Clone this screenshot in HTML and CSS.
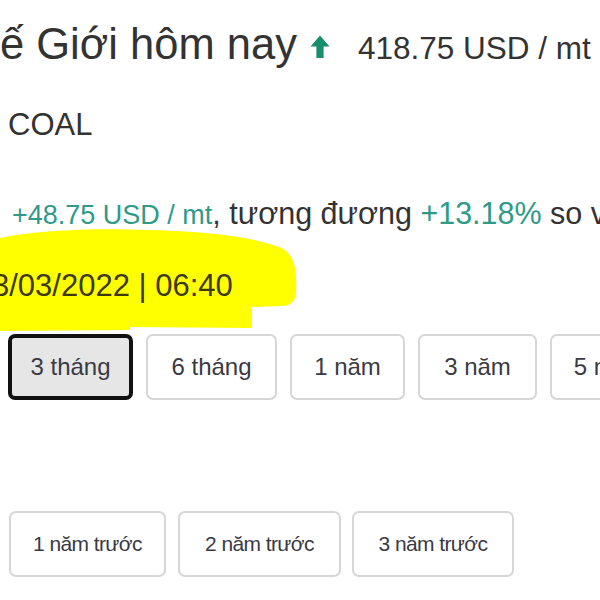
FILE: index.html
```html
<!DOCTYPE html>
<html lang="vi">
<head>
<meta charset="utf-8">
<link rel="stylesheet" href="styles.css">
</head>
<body>
<div class="page">
  <svg class="marker" width="300" height="110" viewBox="0 0 300 110" aria-hidden="true">
    <path d="M0 10 C40 2 90 0 150 2 C210 4 250 8 282 20 C296 28 297 45 296 66 C295 74 290 78 282 78 L252 79 L252 100 L130 99 L130 102 L0 103 Z" fill="#ffff00"/>
  </svg>
  <h1 class="title"><span class="head">ế Giới hôm nay</span><svg class="arrow" width="20" height="23" viewBox="0 0 20 23"><path d="M10 0.5 L19.5 11.5 L13.6 11.5 L13.6 23 L6.4 23 L6.4 11.5 L0.5 11.5 Z" fill="#178f6f"/></svg><span class="price">418.75 USD / mt</span></h1>
  <div class="symbol">COAL</div>
  <p class="change"><span class="up first">+48.75 USD / mt</span>, tương đương <span class="up">+13.18%</span> so với</p>
  <div class="date">3/03/2022 | 06:40</div>
  <div class="ranges">
    <button class="btn active">3 tháng</button>
    <button class="btn w6">6 tháng</button>
    <button class="btn w1">1 năm</button>
    <button class="btn w3">3 năm</button>
    <button class="btn w5">5 năm</button>
  </div>
  <div class="compare">
    <span class="colon">:</span>
    <button class="btn small s1">1 năm trước</button>
    <button class="btn small s2">2 năm trước</button>
    <button class="btn small s3">3 năm trước</button>
  </div>
</div>
</body>
</html>
```
FILE: styles.css
```css
html, body {
  margin: 0;
  padding: 0;
  background: #fff;
  overflow: hidden;
}
.page {
  position: relative;
  width: 600px;
  height: 600px;
  overflow: hidden;
  font-family: "Liberation Sans", Arial, sans-serif;
  color: #333;
  white-space: nowrap;
  display: flex;
  flex-direction: column;
}
.marker {
  position: absolute;
  left: 0;
  top: 228px;
  z-index: 0;
}
.title {
  margin: 18px 0 0 0;
  font-size: 43.5px;
  line-height: 52px;
  font-weight: normal;
  display: flex;
  align-items: baseline;
}
.arrow {
  margin-left: 13px;
  margin-right: 28px;
  align-self: flex-start;
  margin-top: 17px;
}
.price {
  font-size: 31.5px;
}
.symbol {
  margin-top: 31px;
  padding-left: 8px;
  font-size: 31px;
  line-height: 40px;
}
.change {
  margin: 51px 0 0 0;
  padding-left: 12px;
  font-size: 30.5px;
  line-height: 34px;
}
.up {
  color: #2f9a88;
}
.up.first {
  font-size: 27px;
}
.date {
  position: relative;
  z-index: 1;
  margin: 37px 0 0 -8px;
  font-size: 31px;
  line-height: 34px;
  color: #3d3a10;
}
.ranges {
  margin-top: 31px;
  display: flex;
  gap: 13px;
  padding-left: 8px;
}
.btn {
  font-family: "Liberation Sans", Arial, sans-serif;
  font-size: 24px;
  color: #3a3a44;
  background: #fff;
  border: 2px solid #d6d6d6;
  border-radius: 7px;
  height: 66px;
  padding: 0;
  flex: none;
  box-sizing: border-box;
}
.btn.active {
  width: 125px;
  background: #e6e6e6;
  border: 4px solid #111;
}
.ranges .btn.w6 { width: 131px; }
.ranges .btn.w1 { width: 115px; }
.ranges .btn.w3 { width: 119px; }
.ranges .btn.w5 { width: 114px; }
.compare {
  margin-top: 111px;
  display: flex;
  align-items: center;
  gap: 11px;
}
.colon {
  width: 4px;
  margin-left: -6px;
  font-size: 22px;
  color: #3b8fd0;
  overflow: hidden;
}
.btn.small {
  font-size: 21px;
  letter-spacing: -0.6px;
}
.btn.s1 { width: 157px; }
.btn.s2 { width: 163px; margin-left: 1px; }
.btn.s3 { width: 162px; }
```
